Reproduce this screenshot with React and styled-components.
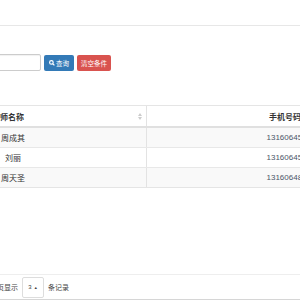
import React from 'react';
import styled, { createGlobalStyle } from 'styled-components';

const Global = createGlobalStyle`
  html, body { margin: 0; padding: 0; background: #fff; overflow: hidden; }
  body { font-family: "Liberation Sans", "Noto Sans CJK SC", sans-serif; color: #333; }
`;

const Page = styled.div`
  width: 600px;
  height: 300px;
  margin-left: -130px;
  display: flex;
  flex-direction: column;
`;

const TopBar = styled.div`
  height: 25px;
  border-bottom: 1px solid #e7e7e7;
`;

const Toolbar = styled.div`
  display: flex;
  align-items: center;
  gap: 3px;
  margin-top: 28px;
  padding-left: 100px;
`;

const Input = styled.div`
  width: 69px;
  height: 15px;
  border: 1px solid #ccc;
  border-radius: 2px;
  box-shadow: inset 0 1px 1px rgba(0,0,0,.06);
`;

const Btn = styled.div`
  display: flex;
  align-items: center;
  justify-content: center;
  gap: 1px;
  width: ${p => p.w}px;
  height: 16px;
  border-radius: 2px;
  background: ${p => p.bg};
  color: #fff;
  font-size: 6.5px;
`;

const Table = styled.div`
  margin-top: 34px;
  width: 565px;
  border-top: 1px solid #e5e5e5;
  border-bottom: 1px solid #e5e5e5;
`;

const Row = styled.div`
  display: grid;
  grid-template-columns: 276px 1fr;
  height: ${p => (p.head ? 20 : 19)}px;
  background: ${p => (p.striped ? '#f9f9f9' : '#fff')};
  border-bottom: ${p => (p.head ? '2px solid #e0e0e0' : '1px solid #e8e8e8')};
  &:last-child { border-bottom: none; }
`;

const Cell = styled.div`
  position: relative;
  display: flex;
  align-items: center;
  justify-content: center;
  font-size: 8px;
  font-weight: ${p => (p.head ? 'bold' : 'normal')};
  color: ${p => (p.num ? '#4a5568' : '#333')};
  padding-left: ${p => p.pl || 0}px;
  padding-right: ${p => p.pr || 0}px;
  border-left: ${p => (p.divider ? '1px solid #e3e3e3' : 'none')};
`;

const Sort = styled.svg`
  position: absolute;
  right: 4px;
  top: 7px;
`;

const Spacer = styled.div`
  flex: 1;
`;

const Footer = styled.div`
  border-top: 1px solid #eee;
  height: 24px;
  display: flex;
  align-items: center;
  padding-left: 120px;
  font-size: 7px;
  color: #444;
`;

const Select = styled.div`
  display: flex;
  align-items: center;
  justify-content: center;
  gap: 2px;
  width: 20px;
  height: 19px;
  margin: 0 4px;
  border: 1px solid #ddd;
  border-radius: 2px;
  font-size: 6px;
`;

const Caret = styled.span`
  font-size: 4px;
`;

const Scroll = styled.div`
  height: 1px;
  background: #d6d6d6;
`;

const SortIcon = () => (
  <Sort width="4" height="7" viewBox="0 0 4 7">
    <path d="M2 0 L4 3 H0 Z M2 7 L0 4 H4 Z" fill="#ccc" />
  </Sort>
);

const rows = [
  { name: '周成其', phone: '13160645123' },
  { name: '刘丽', phone: '13160645124' },
  { name: '周天圣', phone: '13160648125' },
];

export default function App() {
  return (
    <>
      <Global />
      <Page>
        <TopBar />
        <Toolbar>
          <Input />
          <Btn w={30} bg="#337ab7">
            <svg width="6" height="6" viewBox="0 0 10 10">
              <circle cx="4" cy="4" r="3" fill="none" stroke="#fff" strokeWidth="2" />
              <path d="M6 6 L9 9" stroke="#fff" strokeWidth="2.2" />
            </svg>
            查询
          </Btn>
          <Btn w={34} bg="#d9534f">清空条件</Btn>
        </Toolbar>
        <Table>
          <Row head>
            <Cell head>教师名称<SortIcon /></Cell>
            <Cell head divider pr={12}>手机号码<SortIcon /></Cell>
          </Row>
          {rows.map((r, i) => (
            <Row key={r.phone} striped={i % 2 === 0}>
              <Cell pl={10}>{r.name}</Cell>
              <Cell num divider>{r.phone}</Cell>
            </Row>
          ))}
        </Table>
        <Spacer />
        <Footer>
          每页显示
          <Select>3<Caret>▲</Caret></Select>
          条记录
        </Footer>
        <Scroll />
      </Page>
    </>
  );
}
